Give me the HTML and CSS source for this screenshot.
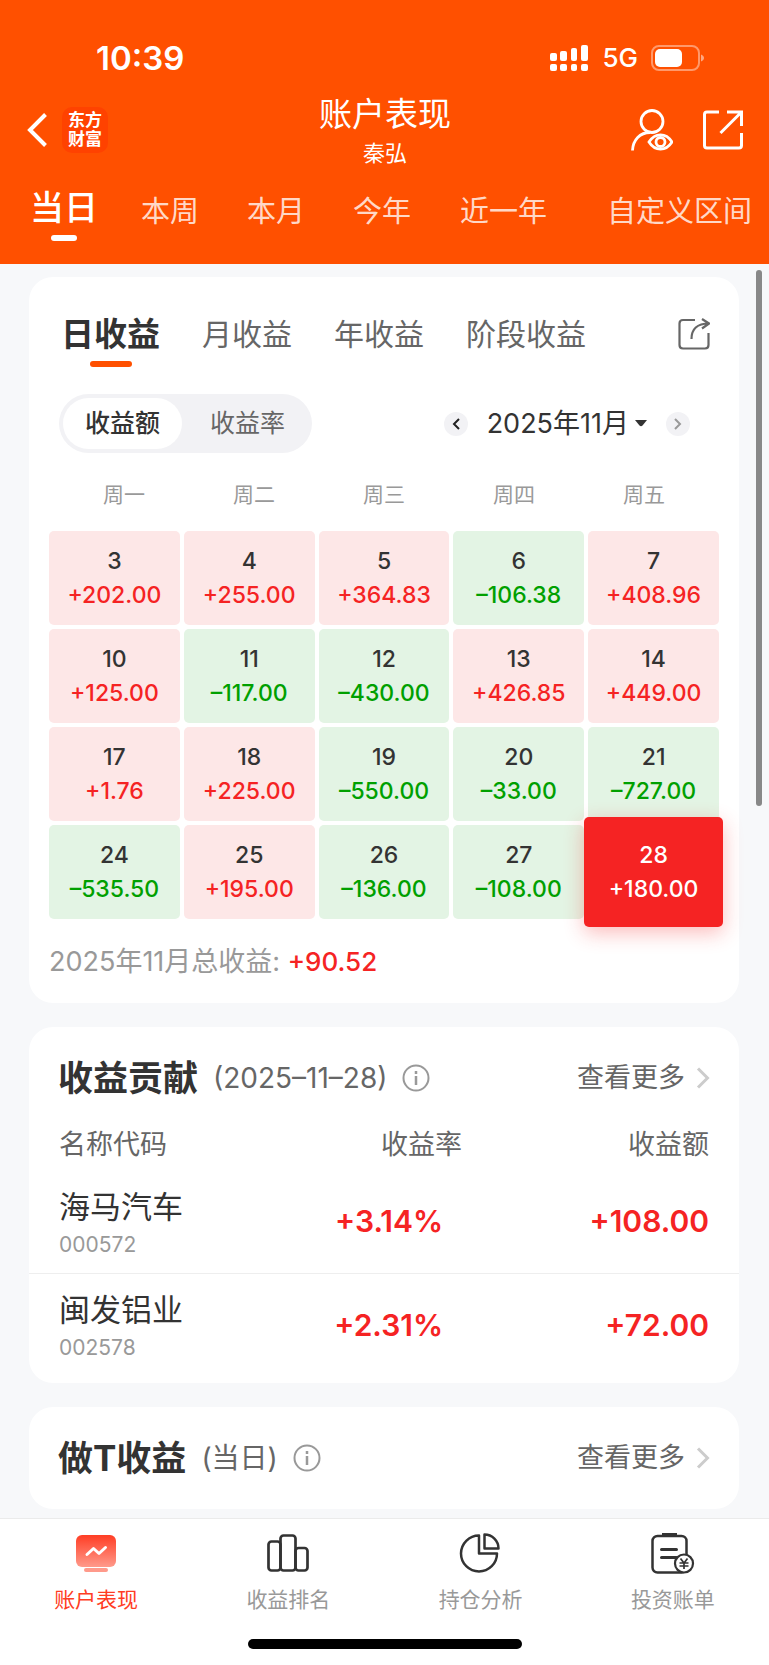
FILE: index.html
```html
<!DOCTYPE html>
<html lang="zh-CN">
<head>
  <meta charset="UTF-8">
  <meta name="viewport" content="width=device-width, initial-scale=1.0">
  <title>账户表现</title>
  <link rel="stylesheet" href="styles.css">
</head>
<body>
  <header class="header">
    <!-- Status bar -->
    <div class="status-bar">
      <span class="time">10:39</span>
      <div class="status-right">
        <svg width="40" height="28" viewBox="0 0 40 28" fill="#fff">
          <rect x="1" y="9" width="7" height="8" rx="2"/>
          <rect x="11" y="7" width="7" height="10" rx="2"/>
          <rect x="22" y="4" width="6" height="13" rx="2"/>
          <rect x="32" y="1" width="7" height="16" rx="2"/>
          <rect x="1" y="20" width="7" height="7" rx="2"/>
          <rect x="11" y="20" width="7" height="7" rx="2"/>
          <rect x="22" y="20" width="6" height="7" rx="2"/>
          <rect x="32" y="20" width="7" height="7" rx="2"/>
        </svg>
        <span class="network">5G</span>
        <svg width="54" height="26" viewBox="0 0 54 26">
          <rect x="1" y="1" width="47" height="24" rx="7" fill="none" stroke="#fff" stroke-opacity=".42" stroke-width="2"/>
          <rect x="4" y="4" width="27" height="18" rx="5" fill="#fff"/>
          <path d="M50 9.500c4 1.500 4 5.500 0 7z" fill="#fff" fill-opacity=".5"/>
        </svg>
      </div>
    </div>

    <!-- Title bar -->
    <div class="nav">
      <div class="nav-left">
        <button class="icon-button" aria-label="返回">
          <svg width="20" height="34" viewBox="0 0 20 34" fill="none" stroke="#fff" stroke-width="4">
            <path d="M18.500 1.500L3 17l15.500 15.500"/>
          </svg>
        </button>
        <a href="#" class="logo"><span>东方</span><span>财富</span></a>
      </div>
      <div class="nav-title">
        <h1>账户表现</h1>
        <p>秦弘</p>
      </div>
      <div class="nav-right">
        <button class="icon-button" aria-label="查看账户">
          <svg width="42" height="42" viewBox="0 0 42 42" fill="none" stroke="#fff" stroke-width="2.800">
            <circle cx="21" cy="12.500" r="11"/>
            <path d="M1.500 41.500C2 31 9 23.500 19 23.500"/>
            <path d="M18 33c6-9.500 17-9.500 23 0c-6 9.500-17 9.500-23 0z"/>
            <circle cx="29.500" cy="33" r="4.500"/>
          </svg>
        </button>
        <button class="icon-button" aria-label="打开">
          <svg width="40" height="40" viewBox="0 0 40 40" fill="none" stroke="#fff" stroke-width="3">
            <path d="M16 2H4Q1.500 2 1.500 4.500V35.500Q1.500 38 4 38H36Q38.500 38 38.500 35.500V23"/>
            <path d="M24 2H38.500V16M38.500 2L17.500 23"/>
          </svg>
        </button>
      </div>
    </div>

    <!-- Period tabs -->
    <nav class="period-tabs">
      <button class="period active">当日</button>
      <button class="period">本周</button>
      <button class="period">本月</button>
      <button class="period">今年</button>
      <button class="period">近一年</button>
      <button class="period custom">自定义区间</button>
    </nav>
  </header>

  <main class="content">
    <!-- Profit calendar -->
    <section class="card calendar-card">
      <div class="profit-tabs">
        <button class="profit-tab active">日收益</button>
        <button class="profit-tab">月收益</button>
        <button class="profit-tab">年收益</button>
        <button class="profit-tab">阶段收益</button>
        <button class="icon-button share" aria-label="分享">
          <svg width="32" height="32" viewBox="0 0 32 32" fill="none" stroke="#666" stroke-width="2.200">
            <path d="M17 2H5Q1.500 2 1.500 5.500V27Q1.500 30.500 5 30.500H27Q30.500 30.500 30.500 27V15"/>
            <path d="M13.500 21C13.500 11 19 5.500 31 5.500M24 1l7 4.500-7 5"/>
          </svg>
        </button>
      </div>

      <div class="controls">
        <div class="toggle">
          <button class="toggle-item active">收益额</button>
          <button class="toggle-item">收益率</button>
        </div>
        <div class="month-picker">
          <button class="arrow" aria-label="上个月">
            <svg width="8" height="12" viewBox="0 0 8 12" fill="none" stroke="#222" stroke-width="2"><path d="M7 1L2 6l5 5"/></svg>
          </button>
          <button class="month">2025年11月
            <svg width="12" height="7" viewBox="0 0 12 7" fill="#333"><path d="M0 0h12L7.500 5.500q-1.500 1.500-3 0z"/></svg>
          </button>
          <button class="arrow" aria-label="下个月">
            <svg width="8" height="12" viewBox="0 0 8 12" fill="none" stroke="#999" stroke-width="2"><path d="M1 1l5 5-5 5"/></svg>
          </button>
        </div>
      </div>

      <div class="weekdays">
        <span>周一</span><span>周二</span><span>周三</span><span>周四</span><span>周五</span>
      </div>

      <div class="days">
        <button class="day up"><span>3</span><b>+202.00</b></button>
        <button class="day up"><span>4</span><b>+255.00</b></button>
        <button class="day up"><span>5</span><b>+364.83</b></button>
        <button class="day down"><span>6</span><b>–106.38</b></button>
        <button class="day up"><span>7</span><b>+408.96</b></button>
        <button class="day up"><span>10</span><b>+125.00</b></button>
        <button class="day down"><span>11</span><b>–117.00</b></button>
        <button class="day down"><span>12</span><b>–430.00</b></button>
        <button class="day up"><span>13</span><b>+426.85</b></button>
        <button class="day up"><span>14</span><b>+449.00</b></button>
        <button class="day up"><span>17</span><b>+1.76</b></button>
        <button class="day up"><span>18</span><b>+225.00</b></button>
        <button class="day down"><span>19</span><b>–550.00</b></button>
        <button class="day down"><span>20</span><b>–33.00</b></button>
        <button class="day down"><span>21</span><b>–727.00</b></button>
        <button class="day down"><span>24</span><b>–535.50</b></button>
        <button class="day up"><span>25</span><b>+195.00</b></button>
        <button class="day down"><span>26</span><b>–136.00</b></button>
        <button class="day down"><span>27</span><b>–108.00</b></button>
        <button class="day selected"><span>28</span><b>+180.00</b></button>
      </div>

      <p class="total">2025年11月总收益: <b>+90.52</b></p>
    </section>

    <!-- Profit contribution -->
    <section class="card stocks-card">
      <div class="card-head">
        <h2>收益贡献</h2>
        <span class="note">(2025–11–28)</span>
        <button class="icon-button" aria-label="说明">
          <svg width="28" height="28" viewBox="0 0 28 28" fill="none" stroke="#999" stroke-width="2">
            <circle cx="14" cy="14" r="12.500"/><path d="M14 12v9M14 7v3" stroke-width="2.500"/>
          </svg>
        </button>
        <a href="#" class="more">查看更多
          <svg width="14" height="22" viewBox="0 0 14 22" fill="none" stroke="#ccc" stroke-width="3"><path d="M2 1.500l9.500 9.500L2 20.500"/></svg>
        </a>
      </div>
      <table class="stocks">
        <thead>
          <tr><th class="name">名称代码</th><th class="rate">收益率</th><th class="amount">收益额</th></tr>
        </thead>
        <tbody>
          <tr>
            <td class="name">海马汽车<small>000572</small></td>
            <td class="rate">+3.14%</td>
            <td class="amount">+108.00</td>
          </tr>
          <tr>
            <td class="name">闽发铝业<small>002578</small></td>
            <td class="rate">+2.31%</td>
            <td class="amount">+72.00</td>
          </tr>
        </tbody>
      </table>
    </section>

    <!-- Intraday trading profit -->
    <section class="card">
      <div class="card-head">
        <h2>做T收益</h2>
        <span class="note">(当日)</span>
        <button class="icon-button" aria-label="说明">
          <svg width="28" height="28" viewBox="0 0 28 28" fill="none" stroke="#999" stroke-width="2">
            <circle cx="14" cy="14" r="12.500"/><path d="M14 12v9M14 7v3" stroke-width="2.500"/>
          </svg>
        </button>
        <a href="#" class="more">查看更多
          <svg width="14" height="22" viewBox="0 0 14 22" fill="none" stroke="#ccc" stroke-width="3"><path d="M2 1.500l9.500 9.500L2 20.500"/></svg>
        </a>
      </div>
    </section>
  </main>

  <!-- Scroll position thumb -->
  <div class="scroll-thumb"></div>

  <!-- Bottom tab bar -->
  <footer class="footer">
    <nav class="tab-bar">
      <a href="#" class="tab active">
        <svg width="44" height="44" viewBox="0 0 44 44">
          <defs>
            <linearGradient id="screen" x1="0" y1="0" x2="0" y2="1">
              <stop offset="0" stop-color="#ff3d24"/>
              <stop offset="1" stop-color="#ff9a8b"/>
            </linearGradient>
          </defs>
          <rect x="2" y="3" width="40" height="32" rx="6" fill="url(#screen)"/>
          <path d="M13 22.500l6.500-6 5.500 5 6.500-6" fill="none" stroke="#fff" stroke-width="3" stroke-linecap="round" stroke-linejoin="round"/>
          <rect x="10" y="36" width="24" height="4" rx="2" fill="#ff9a8b"/>
        </svg>
        <span>账户表现</span>
      </a>
      <a href="#" class="tab">
        <svg width="44" height="44" viewBox="0 0 44 44" fill="none" stroke="#333" stroke-width="2.700">
          <rect x="2.500" y="9.500" width="12" height="29" rx="3"/>
          <rect x="14.500" y="3.500" width="15" height="35" rx="3"/>
          <rect x="29.500" y="16" width="12" height="22.500" rx="3"/>
        </svg>
        <span>收益排名</span>
      </a>
      <a href="#" class="tab">
        <svg width="44" height="44" viewBox="0 0 44 44" fill="none" stroke="#333" stroke-width="2.500" stroke-linejoin="round">
          <path d="M20 3.500A18 18 0 1 0 38 21.500H20z"/>
          <path d="M25.500 2.500V16.500H39.500A14 14 0 0 0 25.500 2.500z"/>
        </svg>
        <span>持仓分析</span>
      </a>
      <a href="#" class="tab">
        <svg width="44" height="44" viewBox="0 0 44 44" fill="none" stroke="#333" stroke-width="2.500">
          <rect x="1.500" y="4" width="34" height="36.500" rx="5"/>
          <path d="M11 2.500H26" stroke-width="3"/>
          <path d="M10.500 17.500H25.500M10.500 25.500H25.500" stroke-width="3" stroke-linecap="round"/>
          <circle cx="33" cy="31.500" r="9" fill="#fff" stroke-width="2.200"/>
          <path d="M29.500 26.500L33 31l3.500-4.500M33 31v6M28.500 31h9M28.500 34h9" stroke-width="1.700"/>
        </svg>
        <span>投资账单</span>
      </a>
    </nav>
    <div class="home-indicator"></div>
  </footer>
</body>
</html>
```

FILE: styles.css
```css
* {
  box-sizing: border-box;
}
body {
  margin: 0;
  min-height: 100vh;
  display: flex;
  flex-direction: column;
  position: relative;
  background-color: #f7f8fa;
  color: #333;
  font-family: Inter, "Noto Sans CJK SC", sans-serif;
}
h1, h2, p {
  margin: 0;
  font-weight: 400;
}
button {
  border: 0;
  padding: 0;
  background: none;
  color: inherit;
  font-family: inherit;
  cursor: pointer;
}
a {
  color: inherit;
  text-decoration: none;
}
svg {
  display: block;
  flex: none;
}
.icon-button {
  display: flex;
}

/* Orange header */
.header {
  background-color: #ff5000;
  color: #fff;
}
.status-bar {
  display: flex;
  align-items: center;
  justify-content: space-between;
  height: 91px;
  padding: 24px 64px 0 96px;
}
.time {
  font-size: 33px;
  font-weight: 600;
}
.status-right {
  display: flex;
  align-items: center;
  gap: 13px;
}
.network {
  font-size: 26px;
  font-weight: 500;
}
.nav {
  display: grid;
  grid-template-columns: 1fr auto 1fr;
  align-items: center;
  padding: 0 26px 0 27px;
}
.nav-left,
.nav-right {
  display: flex;
  align-items: center;
}
.nav-left {
  gap: 15px;
}
.nav-right {
  justify-content: flex-end;
  gap: 30px;
}
.logo {
  display: flex;
  flex-direction: column;
  align-items: center;
  justify-content: center;
  width: 46px;
  height: 46px;
  border-radius: 10px;
  background-color: #ff4200;
  font-size: 17px;
  font-weight: 700;
  line-height: 19px;
}
.nav-title {
  text-align: center;
}
.nav-title h1 {
  font-size: 33px;
  line-height: 46px;
}
.nav-title p {
  font-size: 22px;
  line-height: 32px;
}
.period-tabs {
  display: flex;
  align-items: flex-start;
  height: 95px;
  padding: 14px 17px 0 11px;
}
.period {
  min-width: 106px;
  font-size: 29px;
  line-height: 58px;
  white-space: nowrap;
  color: rgba(255, 255, 255, 0.8);
}
.period.active {
  color: #fff;
  font-size: 34px;
  font-weight: 500;
  line-height: 50px;
}
.period.active::after {
  content: "";
  display: block;
  width: 26px;
  height: 6px;
  margin: 2px auto 0;
  border-radius: 3px;
  background-color: #fff;
}
.period:nth-child(5) {
  padding: 0 25px;
}
.period.custom {
  margin-left: auto;
}

/* White cards */
.content {
  flex: 1;
  display: flex;
  flex-direction: column;
  gap: 24px;
  padding: 13px 30px 8px 29px;
}
.card {
  border-radius: 24px;
  background-color: #fff;
}
.calendar-card {
  padding: 32px 20px 20px;
}
.profit-tabs {
  display: flex;
  align-items: flex-start;
  gap: 42px;
  height: 85px;
  padding: 0 9px 0 12px;
}
.profit-tab {
  color: #666;
  font-size: 30px;
  line-height: 50px;
  white-space: nowrap;
}
.profit-tab.active {
  color: #333;
  font-size: 33px;
  font-weight: 700;
}
.profit-tab.active::after {
  content: "";
  display: block;
  width: 42px;
  height: 6px;
  margin: 2px auto 0;
  border-radius: 3px;
  background-color: #ff5000;
}
.share {
  margin: 9px 0 0 auto;
}
.controls {
  display: flex;
  align-items: center;
  justify-content: space-between;
  padding: 0 29px 0 10px;
}
.toggle {
  display: flex;
  padding: 4px;
  border-radius: 30px;
  background-color: #f2f2f5;
}
.toggle-item {
  padding: 0 22px;
  border-radius: 26px;
  color: #666;
  font-size: 25px;
  line-height: 51px;
}
.toggle-item + .toggle-item {
  padding: 0 23px 0 28px;
}
.toggle-item.active {
  background-color: #fff;
  color: #333;
  font-weight: 500;
}
.month-picker {
  display: flex;
  align-items: center;
  gap: 19px;
}
.arrow {
  display: flex;
  align-items: center;
  justify-content: center;
  width: 24px;
  height: 24px;
  border-radius: 50%;
  background-color: #f2f2f5;
}
.month {
  display: flex;
  align-items: center;
  gap: 6px;
  font-size: 27px;
  line-height: 40px;
}
.weekdays {
  display: grid;
  grid-template-columns: repeat(5, 1fr);
  padding: 26px 10px 20px;
  color: #999;
  font-size: 21px;
  line-height: 32px;
  text-align: center;
}
.days {
  display: grid;
  grid-template-columns: repeat(5, 1fr);
  gap: 4px;
}
.day {
  height: 94px;
  border-radius: 5px;
  font-size: 23px;
  line-height: 34px;
}
.day span,
.day b {
  display: block;
  font-weight: 500;
}
.day.up {
  background-color: #fde7e7;
}
.day.down {
  background-color: #e3f4e4;
}
.up b,
.total b {
  color: #f52323;
}
.down b {
  color: #00a000;
}
/* Selected day is larger than its cell */
.day.selected {
  height: 110px;
  margin: -8px -4px;
  background-color: #f52323;
  box-shadow: 0 6px 20px rgba(245, 35, 35, 0.3);
  color: #fff;
}
.total {
  padding-top: 22px;
  color: #999;
  font-size: 27px;
  line-height: 42px;
}
.total b {
  font-size: 26px;
  font-weight: 500;
}

/* Card heading */
.card-head {
  display: flex;
  align-items: center;
  height: 102px;
  padding: 0 29px;
  line-height: 48px;
}
.card-head h2 {
  font-size: 35px;
  font-weight: 700;
}
.note {
  margin: 0 15px;
  color: #666;
  font-size: 28px;
}
.more {
  display: flex;
  align-items: center;
  gap: 11px;
  margin-left: auto;
  color: #666;
  font-size: 27px;
}

/* Stock list */
.stocks-card {
  padding-bottom: 7px;
}
.stocks {
  width: 100%;
  table-layout: fixed;
  border-collapse: collapse;
}
.stocks th {
  height: 41px;
  padding: 0;
  color: #666;
  font-size: 27px;
  font-weight: 400;
  line-height: 32px;
  vertical-align: top;
}
.stocks td {
  height: 103px;
  padding: 0;
  font-size: 30px;
}
.stocks .name {
  width: 40%;
  padding-left: 30px;
  text-align: left;
}
.stocks td.name {
  padding-top: 3px;
  font-size: 31px;
  line-height: 44px;
}
.stocks small {
  display: block;
  color: #999;
  font-size: 21px;
  line-height: 32px;
}
.stocks .rate {
  text-align: right;
}
.stocks .amount {
  width: 39%;
  padding-right: 30px;
  text-align: right;
}
.stocks td.rate,
.stocks td.amount {
  color: #f52323;
  font-weight: 600;
}
.stocks td.rate {
  padding-right: 19px;
}
.stocks tbody tr + tr {
  border-top: 1px solid #eee;
}

.scroll-thumb {
  position: absolute;
  top: 270px;
  right: 7px;
  width: 6px;
  height: 536px;
  border-radius: 3px;
  background-color: #888;
}

/* Bottom tab bar */
.footer {
  border-top: 1px solid #ebebeb;
  background-color: #fff;
}
.tab-bar {
  display: grid;
  grid-template-columns: repeat(4, 1fr);
  padding-top: 13px;
}
.tab {
  display: flex;
  flex-direction: column;
  align-items: center;
  gap: 8px;
  color: #999;
  font-size: 21px;
  line-height: 32px;
}
.tab.active {
  color: #ff3d24;
}
.home-indicator {
  width: 274px;
  height: 10px;
  margin: 23px auto 16px;
  border-radius: 5px;
  background-color: #000;
}
```
